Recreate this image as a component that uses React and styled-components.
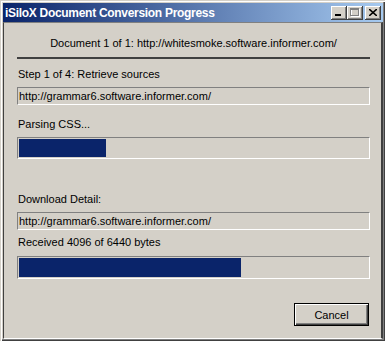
import React from "react";
import styled, { createGlobalStyle } from "styled-components";

const Global = createGlobalStyle`
  html, body { margin: 0; padding: 0; background: #d4d0c8; }
  body { font-family: "Liberation Sans", Arial, sans-serif; }
`;

const Window = styled.div`
  width: 385px;
  height: 341px;
  box-sizing: border-box;
  background: #d4d0c8;
  display: flex;
  flex-direction: column;
  padding: 3px 2px 2px 3px;
  box-shadow: inset 1px 1px #d4d0c8, inset 2px 2px #ffffff, inset -1px -1px #404040, inset -2px -2px #808080;
`;

const TitleBar = styled.div`
  height: 19px;
  display: flex;
  align-items: center;
  padding: 0 2px 0 2px;
  background: linear-gradient(to right, #0a246a, #a6caf0);
  flex: none;
`;

const Title = styled.div`
  flex: 1;
  color: #fff;
  font-weight: bold;
  font-family: "Liberation Sans", Arial, sans-serif;
  font-size: 12px;
  letter-spacing: -0.3px;
`;

const CtrlGroup = styled.div`
  display: flex;
  align-items: center;
`;

const Ctrl = styled.div`
  width: 16px;
  height: 14px;
  box-sizing: border-box;
  background: #d4d0c8;
  margin-left: ${(p) => (p.$gap ? "2px" : "0")};
  box-shadow: inset -1px -1px #404040, inset 1px 1px #ffffff, inset -2px -2px #808080;
  display: flex;
  align-items: center;
  justify-content: center;
`;

const Client = styled.div`
  flex: 1;
  display: flex;
  flex-direction: column;
  padding: 0 11px 0 13px;
  border-left: 1px solid #404040;
  border-right: 2px solid #404040;
  border-top: 1px solid #808080;
  border-bottom: 1px solid #ffffff;
  font-size: 11px;
  color: #000;
`;

const Header = styled.div`
  text-align: center;
  line-height: 14px;
  margin-top: 13px;
`;

const Rule = styled.div`
  height: 2px;
  background: #404040;
  margin-top: 7px;
`;

const Label = styled.div`
  line-height: 14px;
  margin-top: ${(p) => p.$mt}px;
  padding-left: 1px;
`;

const Field = styled.div`
  height: 18px;
  box-sizing: border-box;
  margin-top: 6px;
  border-top: 1px solid #808080;
  border-left: 1px solid #808080;
  border-bottom: 1px solid #ffffff;
  border-right: 1px solid #ffffff;
  padding-left: 1px;
  line-height: 16px;
  white-space: nowrap;
`;

const Progress = styled.div`
  height: ${(p) => p.$h}px;
  box-sizing: border-box;
  margin-top: ${(p) => p.$mt}px;
  border-top: 1px solid #808080;
  border-left: 1px solid #808080;
  border-bottom: 1px solid #ffffff;
  border-right: 1px solid #ffffff;
  padding: 1px;
`;

const Fill = styled.div`
  height: 100%;
  background: #0a246a;
`;

const Footer = styled.div`
  display: flex;
  justify-content: flex-end;
  margin-top: 24px;
  padding-right: 1px;
`;

const Button = styled.button`
  width: 75px;
  height: 23px;
  box-sizing: border-box;
  border: 1px solid #000;
  background: #d4d0c8;
  box-shadow: inset 1px 1px #ffffff, inset -1px -1px #404040, inset -2px -2px #808080;
  font-family: "Liberation Sans", Arial, sans-serif;
  font-size: 11px;
  color: #000;
  padding: 0;
`;

export default function App() {
  return (
    <>
      <Global />
      <Window>
        <TitleBar>
          <Title>iSiloX Document Conversion Progress</Title>
          <CtrlGroup>
            <Ctrl>
              <svg width="8" height="8" viewBox="0 0 8 8">
                <rect x="0" y="5" width="6" height="2" fill="#000" />
              </svg>
            </Ctrl>
            <Ctrl>
              <svg width="10" height="9" viewBox="0 0 10 9">
                <rect x="1.5" y="1.5" width="8" height="7" fill="none" stroke="#fff" />
                <rect x="0.5" y="0.5" width="8" height="7" fill="none" stroke="#808080" />
                <rect x="0.5" y="0.5" width="8" height="1.5" fill="#808080" />
              </svg>
            </Ctrl>
            <Ctrl $gap>
              <svg width="8" height="7" viewBox="0 0 8 7">
                <path d="M0 0 L8 7 M8 0 L0 7" stroke="#000" strokeWidth="1.6" />
              </svg>
            </Ctrl>
          </CtrlGroup>
        </TitleBar>
        <Client>
          <Header>Document 1 of 1: http://whitesmoke.software.informer.com/</Header>
          <Rule />
          <Label $mt={8}>Step 1 of 4: Retrieve sources</Label>
          <Field>http://grammar6.software.informer.com/</Field>
          <Label $mt={12}>Parsing CSS...</Label>
          <Progress $h={22} $mt={6}>
            <Fill style={{ width: "25%" }} />
          </Progress>
          <Label $mt={33}>Download Detail:</Label>
          <Field>http://grammar6.software.informer.com/</Field>
          <Label $mt={5}>Received 4096 of 6440 bytes</Label>
          <Progress $h={23} $mt={7}>
            <Fill style={{ width: `${(4096 / 6440) * 100}%` }} />
          </Progress>
          <Footer>
            <Button>Cancel</Button>
          </Footer>
        </Client>
      </Window>
    </>
  );
}
